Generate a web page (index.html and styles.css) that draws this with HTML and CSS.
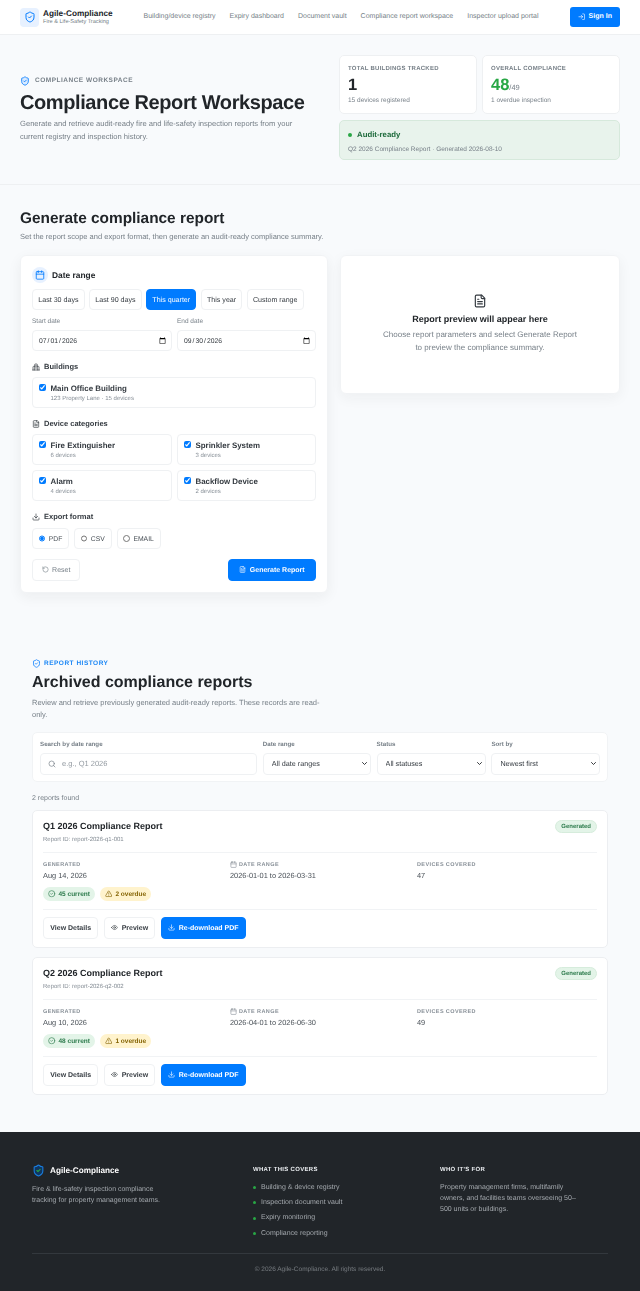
FILE: index.html
```html
<!DOCTYPE html>
<html lang="en">
<head>
    <meta charset="UTF-8">
    <meta name="viewport" content="width=device-width, initial-scale=1.0">
    <title>Compliance Report Workspace - Agile-Compliance</title>
    <link rel="stylesheet" href="styles.css">
</head>
<body>
    <svg class="sprite" aria-hidden="true">
        <symbol id="i-shield" viewBox="0 0 24 24"><path d="M20 13c0 5-3.5 7.5-7.66 8.95a1 1 0 0 1-.67-.01C7.5 20.5 4 18 4 13V6a1 1 0 0 1 1-1c2 0 4.5-1.2 6.24-2.72a1.17 1.17 0 0 1 1.52 0C14.51 3.81 17 5 19 5a1 1 0 0 1 1 1z"/><path d="m9 12 2 2 4-4"/></symbol>
        <symbol id="i-login" viewBox="0 0 24 24"><path d="M15 3h4a2 2 0 0 1 2 2v14a2 2 0 0 1-2 2h-4"/><path d="m10 17 5-5-5-5"/><path d="M15 12H3"/></symbol>
        <symbol id="i-calendar" viewBox="0 0 24 24"><rect x="3" y="4" width="18" height="18" rx="2"/><path d="M16 2v4M8 2v4M3 10h18"/></symbol>
        <symbol id="i-building" viewBox="0 0 24 24"><path d="M8 21V5a2 2 0 0 1 2-2h4a2 2 0 0 1 2 2v16"/><path d="M8 10H5a2 2 0 0 0-2 2v9M16 10h3a2 2 0 0 1 2 2v9M2 21h20"/><path d="M11 7h2M11 11h2M11 15h2"/></symbol>
        <symbol id="i-file" viewBox="0 0 24 24"><path d="M15 2H6a2 2 0 0 0-2 2v16a2 2 0 0 0 2 2h12a2 2 0 0 0 2-2V7Z"/><path d="M14 2v4a2 2 0 0 0 2 2h4"/><path d="M10 9H8M16 13H8M16 17H8"/></symbol>
        <symbol id="i-download" viewBox="0 0 24 24"><path d="M21 15v4a2 2 0 0 1-2 2H5a2 2 0 0 1-2-2v-4"/><path d="m7 10 5 5 5-5"/><path d="M12 15V3"/></symbol>
        <symbol id="i-reset" viewBox="0 0 24 24"><path d="M3 12a9 9 0 1 0 9-9 9.75 9.75 0 0 0-6.74 2.74L3 8"/><path d="M3 3v5h5"/></symbol>
        <symbol id="i-search" viewBox="0 0 24 24"><circle cx="11" cy="11" r="8"/><path d="m21 21-4.3-4.3"/></symbol>
        <symbol id="i-eye" viewBox="0 0 24 24"><path d="M2 12s3.5-7 10-7 10 7 10 7-3.5 7-10 7-10-7-10-7Z"/><circle cx="12" cy="12" r="3"/></symbol>
        <symbol id="i-check" viewBox="0 0 24 24"><circle cx="12" cy="12" r="10"/><path d="m9 12 2 2 4-4"/></symbol>
        <symbol id="i-alert" viewBox="0 0 24 24"><path d="m21.73 18-8-14a2 2 0 0 0-3.48 0l-8 14A2 2 0 0 0 4 21h16a2 2 0 0 0 1.73-3"/><path d="M12 9v4M12 17h.01"/></symbol>
    </svg>

    <header class="topbar">
        <div class="brand">
            <span class="brand-mark"><svg class="icon"><use href="#i-shield"/></svg></span>
            <div class="brand-text">
                <div class="brand-name">Agile-Compliance</div>
                <div class="brand-tag">Fire &amp; Life-Safety Tracking</div>
            </div>
        </div>
        <nav class="nav">
            <a href="#">Building/device registry</a>
            <a href="#">Expiry dashboard</a>
            <a href="#">Document vault</a>
            <a href="#">Compliance report workspace</a>
            <a href="#">Inspector upload portal</a>
        </nav>
        <a class="signin" href="#"><svg class="icon"><use href="#i-login"/></svg>Sign In</a>
    </header>

    <section class="hero">
        <div class="hero-text">
            <div class="eyebrow"><svg class="icon"><use href="#i-shield"/></svg>COMPLIANCE WORKSPACE</div>
            <h1>Compliance Report Workspace</h1>
            <p>Generate and retrieve audit-ready fire and life-safety inspection reports from your current registry and inspection history.</p>
        </div>
        <div class="hero-side">
            <div class="stat">
                <div class="stat-label">TOTAL BUILDINGS TRACKED</div>
                <div class="stat-value">1</div>
                <div class="stat-note">15 devices registered</div>
            </div>
            <div class="stat">
                <div class="stat-label">OVERALL COMPLIANCE</div>
                <div class="stat-value green">48<small>/49</small></div>
                <div class="stat-note">1 overdue inspection</div>
            </div>
            <div class="audit">
                <div class="audit-title"><span class="dot"></span>Audit-ready</div>
                <div class="audit-note">Q2 2026 Compliance Report · Generated 2026-08-10</div>
            </div>
        </div>
    </section>

    <section class="generate">
        <h2>Generate compliance report</h2>
        <p class="lead">Set the report scope and export format, then generate an audit-ready compliance summary.</p>
        <div class="generate-grid">
            <form class="panel form-panel">
                <div class="panel-head">
                    <span class="head-icon"><svg class="icon"><use href="#i-calendar"/></svg></span>
                    <span>Date range</span>
                </div>
                <div class="pills">
                    <button type="button" class="pill">Last 30 days</button>
                    <button type="button" class="pill">Last 90 days</button>
                    <button type="button" class="pill active">This quarter</button>
                    <button type="button" class="pill">This year</button>
                    <button type="button" class="pill">Custom range</button>
                </div>
                <div class="two-col dates">
                    <label class="field"><span>Start date</span><input type="date" value="2026-07-01"></label>
                    <label class="field"><span>End date</span><input type="date" value="2026-09-30"></label>
                </div>

                <div class="group-title"><svg class="icon"><use href="#i-building"/></svg>Buildings</div>
                <label class="option">
                    <input type="checkbox" checked>
                    <span><strong>Main Office Building</strong><small>123 Property Lane · 15 devices</small></span>
                </label>

                <div class="group-title"><svg class="icon"><use href="#i-file"/></svg>Device categories</div>
                <div class="two-col options">
                    <label class="option"><input type="checkbox" checked><span><strong>Fire Extinguisher</strong><small>6 devices</small></span></label>
                    <label class="option"><input type="checkbox" checked><span><strong>Sprinkler System</strong><small>3 devices</small></span></label>
                    <label class="option"><input type="checkbox" checked><span><strong>Alarm</strong><small>4 devices</small></span></label>
                    <label class="option"><input type="checkbox" checked><span><strong>Backflow Device</strong><small>2 devices</small></span></label>
                </div>

                <div class="group-title export"><svg class="icon"><use href="#i-download"/></svg>Export format</div>
                <div class="radios">
                    <label class="radio"><input type="radio" name="format" checked>PDF</label>
                    <label class="radio"><input type="radio" name="format">CSV</label>
                    <label class="radio"><input type="radio" name="format">EMAIL</label>
                </div>

                <div class="form-actions">
                    <button type="reset" class="btn reset"><svg class="icon"><use href="#i-reset"/></svg>Reset</button>
                    <button type="button" class="btn primary big"><svg class="icon"><use href="#i-file"/></svg>Generate Report</button>
                </div>
            </form>

            <div class="panel preview">
                <svg class="icon"><use href="#i-file"/></svg>
                <h3>Report preview will appear here</h3>
                <p>Choose report parameters and select Generate Report to preview the compliance summary.</p>
            </div>
        </div>
    </section>

    <section class="archive">
        <div class="eyebrow blue"><svg class="icon"><use href="#i-shield"/></svg>REPORT HISTORY</div>
        <h2>Archived compliance reports</h2>
        <p class="lead">Review and retrieve previously generated audit-ready reports. These records are read-only.</p>

        <div class="filters">
            <label class="filter search-filter">
                <span>Search by date range</span>
                <span class="search-box"><svg class="icon"><use href="#i-search"/></svg><input type="text" placeholder="e.g., Q1 2026"></span>
            </label>
            <label class="filter"><span>Date range</span><select><option>All date ranges</option></select></label>
            <label class="filter"><span>Status</span><select><option>All statuses</option></select></label>
            <label class="filter"><span>Sort by</span><select><option>Newest first</option></select></label>
        </div>

        <div class="found">2 reports found</div>

        <article class="report">
            <div class="report-head">
                <div>
                    <h3>Q1 2026 Compliance Report</h3>
                    <div class="report-id">Report ID: report-2026-q1-001</div>
                </div>
                <span class="generated">Generated</span>
            </div>
            <div class="report-meta">
                <div><div class="meta-label">GENERATED</div><div class="meta-value">Aug 14, 2026</div></div>
                <div><div class="meta-label"><svg class="icon"><use href="#i-calendar"/></svg>DATE RANGE</div><div class="meta-value">2026-01-01 to 2026-03-31</div></div>
                <div><div class="meta-label">DEVICES COVERED</div><div class="meta-value">47</div></div>
            </div>
            <div class="chips">
                <span class="chip ok"><svg class="icon"><use href="#i-check"/></svg>45 current</span>
                <span class="chip warn"><svg class="icon"><use href="#i-alert"/></svg>2 overdue</span>
            </div>
            <div class="report-actions">
                <a class="btn" href="#">View Details</a>
                <a class="btn" href="#"><svg class="icon"><use href="#i-eye"/></svg>Preview</a>
                <a class="btn primary" href="#"><svg class="icon"><use href="#i-download"/></svg>Re-download PDF</a>
            </div>
        </article>

        <article class="report">
            <div class="report-head">
                <div>
                    <h3>Q2 2026 Compliance Report</h3>
                    <div class="report-id">Report ID: report-2026-q2-002</div>
                </div>
                <span class="generated">Generated</span>
            </div>
            <div class="report-meta">
                <div><div class="meta-label">GENERATED</div><div class="meta-value">Aug 10, 2026</div></div>
                <div><div class="meta-label"><svg class="icon"><use href="#i-calendar"/></svg>DATE RANGE</div><div class="meta-value">2026-04-01 to 2026-06-30</div></div>
                <div><div class="meta-label">DEVICES COVERED</div><div class="meta-value">49</div></div>
            </div>
            <div class="chips">
                <span class="chip ok"><svg class="icon"><use href="#i-check"/></svg>48 current</span>
                <span class="chip warn"><svg class="icon"><use href="#i-alert"/></svg>1 overdue</span>
            </div>
            <div class="report-actions">
                <a class="btn" href="#">View Details</a>
                <a class="btn" href="#"><svg class="icon"><use href="#i-eye"/></svg>Preview</a>
                <a class="btn primary" href="#"><svg class="icon"><use href="#i-download"/></svg>Re-download PDF</a>
            </div>
        </article>
    </section>

    <footer class="footer">
        <div class="footer-grid">
            <div>
                <div class="footer-brand">
                    <svg class="footer-shield" viewBox="0 0 24 24"><path d="M20 13c0 5-3.5 7.5-7.66 8.95a1 1 0 0 1-.67-.01C7.5 20.5 4 18 4 13V6a1 1 0 0 1 1-1c2 0 4.5-1.2 6.24-2.72a1.17 1.17 0 0 1 1.52 0C14.51 3.81 17 5 19 5a1 1 0 0 1 1 1z"/><path class="tick" d="m9 12 2 2 4-4"/></svg>
                    Agile-Compliance
                </div>
                <p>Fire &amp; life-safety inspection compliance tracking for property management teams.</p>
            </div>
            <div>
                <h4>WHAT THIS COVERS</h4>
                <ul>
                    <li>Building &amp; device registry</li>
                    <li>Inspection document vault</li>
                    <li>Expiry monitoring</li>
                    <li>Compliance reporting</li>
                </ul>
            </div>
            <div>
                <h4>WHO IT'S FOR</h4>
                <p class="who">Property management firms, multifamily owners, and facilities teams overseeing 50–500 units or buildings.</p>
            </div>
        </div>
        <div class="copyright">© 2026 Agile-Compliance. All rights reserved.</div>
    </footer>
</body>
</html>
```

FILE: styles.css
```css
* { box-sizing: border-box; }
body {
    margin: 0;
    background: #f8fafc;
    color: #212529;
    font-family: "Liberation Sans", Arial, sans-serif;
    font-size: 8px;
    line-height: 1.5;
    text-rendering: geometricPrecision;
    will-change: opacity;
}
input, select, button { text-rendering: geometricPrecision; }
.sprite { display: none; }
.icon {
    width: 1em;
    height: 1em;
    fill: none;
    stroke: currentColor;
    stroke-width: 2;
    stroke-linecap: round;
    stroke-linejoin: round;
    flex: none;
}
a { text-decoration: none; color: inherit; white-space: nowrap; }
p, h1, h2, h3, h4 { margin: 0; }

/* top bar */
.topbar {
    height: 35px;
    display: flex;
    align-items: center;
    padding: 0 20px;
    background: #fff;
    border-bottom: 1px solid #eef0f2;
}
.brand { display: flex; align-items: center; gap: 4px; width: 123.5px; flex: none; }
.brand-mark {
    width: 19px;
    height: 19px;
    border-radius: 4px;
    background: #e7f1ff;
    color: #007bff;
    display: flex;
    align-items: center;
    justify-content: center;
    font-size: 12px;
}
.brand-text { padding-top: 1px; }
.brand-name { font-size: 8.25px; font-weight: bold; line-height: 10px; color: #212529; }
.brand-tag { font-size: 5.6px; line-height: 7px; color: #767f87; }
.nav { flex: 1; display: flex; gap: 14px; padding-top: 1px; font-size: 7px; color: #767f87; }
.signin {
    display: flex;
    align-items: center;
    justify-content: center;
    gap: 3px;
    width: 50px;
    height: 20px;
    padding-top: 1px;
    border-radius: 3px;
    background: #007bff;
    color: #fff;
    font-size: 7px;
    font-weight: bold;
}
.signin .icon { font-size: 7.5px; margin-top: -1px; }

/* hero */
.hero {
    display: flex;
    justify-content: space-between;
    align-items: center;
    padding: 20px 20px 24px;
    border-bottom: 1px solid #eef0f2;
    background: #f8fafc;
}
.hero-text { width: 290px; padding-top: 4px; }
.eyebrow {
    display: flex;
    align-items: center;
    gap: 5px;
    font-size: 6.5px;
    font-weight: bold;
    letter-spacing: 0.5px;
    color: #767f87;
}
.eyebrow .icon { font-size: 10px; color: #007bff; fill: #d9eaff; }
.hero h1 {
    font-size: 20px;
    line-height: 26px;
    margin-top: 4px;
    letter-spacing: -0.4px;
    white-space: nowrap;
}
.hero p { margin-top: 2.5px; font-size: 7.6px; line-height: 12.5px; color: #767f87; }
.hero-side {
    width: 281px;
    display: grid;
    grid-template-columns: 1fr 1fr;
    gap: 6px 5px;
}
.stat {
    height: 59px;
    padding: 8.5px 8px;
    background: #fff;
    border: 1px solid #eef0f2;
    border-radius: 5px;
}
.stat-label { font-size: 6px; line-height: 9px; font-weight: bold; letter-spacing: 0.25px; color: #767f87; }
.stat-value { height: 20px; font-size: 16.5px; line-height: 20px; margin-top: 1px; font-weight: bold; color: #212529; }
.stat-value.green { color: #28a745; }
.stat-value small { font-size: 7.5px; line-height: 1; font-weight: normal; color: #767f87; }
.stat-note { font-size: 6.5px; line-height: 10px; margin-top: 1.5px; color: #767f87; }
.audit {
    grid-column: 1 / 3;
    height: 40px;
    padding: 8px;
    background: #e8f3ec;
    border: 1px solid #d6e9dc;
    border-radius: 5px;
}
.audit-title { display: flex; align-items: center; gap: 5px; font-size: 7.8px; line-height: 11px; font-weight: bold; color: #1e6b3c; }
.dot { width: 4px; height: 4px; border-radius: 50%; background: #28a745; }
.audit-note { margin-top: 5px; font-size: 6.5px; line-height: 9px; color: #767f87; }

/* generate */
.generate { padding: 23px 20px 0; }
.generate h2 { font-size: 15.4px; line-height: 21px; }
.lead { font-size: 7.5px; color: #767f87; }
.generate .lead { margin-top: 1px; line-height: 13px; }
.generate-grid {
    display: grid;
    grid-template-columns: 308px 280px;
    gap: 12px;
    align-items: start;
    margin-top: 12px;
}
.panel {
    background: #fff;
    border: 1px solid #f1f3f5;
    border-radius: 6px;
    box-shadow: 0 4px 14px rgba(33, 37, 41, 0.06);
}
.form-panel { padding: 11px; height: 338px; }
.panel-head { display: flex; align-items: center; gap: 4px; font-size: 8.4px; font-weight: bold; }
.head-icon {
    width: 16px;
    height: 16px;
    border-radius: 50%;
    background: #e7f1ff;
    color: #007bff;
    display: flex;
    align-items: center;
    justify-content: center;
    font-size: 10px;
}
.pills { display: flex; gap: 4.2px; margin-top: 6px; }
.pill {
    height: 21px;
    padding: 0 5.3px;
    background: #fff;
    border: 1px solid #eff1f3;
    border-radius: 4px;
    font: 7.1px "Liberation Sans", Arial, sans-serif;
    color: #343a40;
    white-space: nowrap;
}
.pill.active { background: #007bff; border-color: #007bff; color: #fff; }
.two-col { display: grid; grid-template-columns: 140px 139px; gap: 5px; }
.dates { margin-top: 6px; }
.field span { display: block; padding-top: 1px; font-size: 6.5px; line-height: 9px; margin-bottom: 4px; color: #767f87; }
.field input {
    width: 100%;
    height: 21px;
    padding: 1px 5px 0;
    border: 1px solid #eff1f3;
    border-radius: 4px;
    font: 6.8px "Liberation Sans", Arial, sans-serif;
    color: #343a40;
    background: #fff;
}
.field input::-webkit-calendar-picker-indicator { width: 7.5px; height: 7.5px; padding: 0; margin: 0; }
.group-title {
    display: flex;
    align-items: center;
    gap: 4px;
    margin-top: 10.5px;
    margin-bottom: 5.5px;
    font-size: 7.5px;
    line-height: 10px;
    font-weight: bold;
    color: #343a40;
}
.group-title.export { margin-top: 11px; margin-bottom: 6px; }
.group-title .icon { font-size: 8px; }
.option {
    display: flex;
    gap: 5px;
    height: 31px;
    padding: 6px;
    border: 1px solid #eff1f3;
    border-radius: 4px;
}
.option input { width: 6.5px; height: 6.5px; margin: 0; accent-color: #007bff; flex: none; }
.option strong { display: block; font-size: 7.9px; line-height: 10px; color: #343a40; }
.option small { display: block; font-size: 6px; line-height: 9.5px; padding-top: 0.5px; color: #868e96; }
.options { row-gap: 5px; }
.radios { display: flex; gap: 5.2px; margin-top: 6px; }
.radio {
    display: flex;
    align-items: center;
    gap: 3.5px;
    height: 21px;
    padding: 1px 5.7px 0;
    border: 1px solid #eff1f3;
    border-radius: 4px;
    font-size: 6.8px;
    line-height: 19px;
    color: #495057;
}
.radio input { width: 6.5px; height: 6.5px; margin: -1px 0 0; accent-color: #007bff; }
.form-actions { display: flex; justify-content: space-between; margin-top: 10px; }

/* buttons */
.btn {
    display: inline-flex;
    align-items: center;
    justify-content: center;
    gap: 3.5px;
    height: 22px;
    padding: 1px 6.3px 0;
    background: #fff;
    border: 1px solid #eff1f3;
    border-radius: 4px;
    font: bold 7px "Liberation Sans", Arial, sans-serif;
    color: #343a40;
    white-space: nowrap;
}
.btn .icon { font-size: 7px; margin-top: -1.5px; }
.btn.primary { background: #007bff; border-color: #007bff; color: #fff; }
.btn.reset { width: 48px; font-weight: normal; color: #767f87; }
.btn.big { width: 88px; }

/* preview */
.preview {
    height: 139px;
    padding: 0 40px 1px;
    display: flex;
    flex-direction: column;
    align-items: center;
    justify-content: center;
    text-align: center;
    box-shadow: 0 4px 14px rgba(33, 37, 41, 0.05);
}
.preview .icon { font-size: 14px; color: #343a40; }
.preview h3 { margin-top: 3px; font-size: 9px; line-height: 16px; }
.preview p { margin-top: 2px; font-size: 8px; line-height: 12.5px; color: #767f87; }

/* archive */
.archive { padding: 65px 32px 37px; }
.eyebrow.blue { color: #1a86f5; gap: 3px; line-height: 10px; padding-top: 1px; }
.eyebrow.blue .icon { font-size: 9px; fill: none; margin-top: -1px; }
.archive h2 { margin-top: 3.5px; line-height: 20px; font-size: 16px; }
.archive .lead { width: 292px; margin-top: 4px; line-height: 12px; }
.filters {
    display: grid;
    grid-template-columns: 217px 108px 109px 108.6px;
    gap: 5.8px;
    height: 50px;
    margin-top: 11.5px;
    padding: 6.5px 7px;
    background: #fff;
    border: 1px solid #f1f3f5;
    border-radius: 5px;
}
.filter > span:first-child { display: block; font-size: 6.2px; line-height: 9px; font-weight: bold; margin-bottom: 4px; color: #767f87; }
.search-box {
    display: flex;
    align-items: center;
    gap: 6px;
    height: 22.5px;
    padding: 0 7px;
    border: 1px solid #eff1f3;
    border-radius: 4px;
}
.search-box .icon { font-size: 8px; color: #767f87; }
.search-box input { flex: 1; min-width: 0; border: 0; outline: 0; padding: 0; font: 7.5px "Liberation Sans", Arial, sans-serif; }
.search-box input::placeholder { color: #939aa1; }
.filter select {
    width: 100%;
    height: 22.5px;
    padding: 0 8px;
    border: 1px solid #eff1f3;
    border-radius: 4px;
    appearance: none;
    background: #fff url("data:image/svg+xml,%3Csvg xmlns='http://www.w3.org/2000/svg' viewBox='0 0 10 6'%3E%3Cpath d='M1 1l4 4 4-4' fill='none' stroke='%23212529' stroke-width='1.8' stroke-linecap='round' stroke-linejoin='round'/%3E%3C/svg%3E") no-repeat right 2.5px center / 5px 3px;
    font: 7.2px "Liberation Sans", Arial, sans-serif;
    color: #343a40;
}
.found { margin-top: 10.5px; margin-bottom: 6.5px; font-size: 7px; line-height: 11px; color: #767f87; }
.report {
    height: 138px;
    margin-bottom: 9px;
    padding: 10px;
    background: #fff;
    border: 1px solid #eceef1;
    border-radius: 5px;
}
.report:last-child { margin-bottom: 0; }
.report-head {
    display: flex;
    justify-content: space-between;
    align-items: flex-start;
    height: 32px;
    border-bottom: 1px solid #f1f3f5;
}
.report-head h3 { font-size: 9px; line-height: 10px; }
.report-id { margin-top: 4.5px; font-size: 6px; line-height: 9px; color: #868e96; }
.generated {
    height: 12.5px;
    padding: 0 5px;
    margin-top: -1px;
    border: 0.5px solid #d6ecdc;
    border-radius: 7px;
    background: #e3f4e8;
    color: #2b7a4b;
    font-size: 6px;
    line-height: 12.5px;
    font-weight: bold;
}
.report-meta {
    display: grid;
    grid-template-columns: repeat(3, 187px);
    margin-top: 7.5px;
}
.meta-label {
    display: flex;
    align-items: center;
    gap: 2px;
    height: 8px;
    font-size: 5.5px;
    line-height: 8px;
    font-weight: bold;
    letter-spacing: 0.4px;
    color: #868e96;
}
.meta-label .icon { font-size: 7px; }
.meta-value { margin-top: 1.5px; font-size: 7.4px; line-height: 11px; color: #495057; }
.chips { display: flex; gap: 5px; margin-top: 6px; }
.chip {
    display: inline-flex;
    align-items: center;
    gap: 3px;
    height: 14px;
    padding: 1px 5px 0;
    border-radius: 7px;
    font-size: 6.5px;
    font-weight: bold;
}
.chip .icon { font-size: 7.5px; margin-top: -1px; }
.chip.ok { background: #e3f4e8; color: #2b7a4b; }
.chip.warn { background: #fff3cd; color: #856404; }
.report-actions { display: flex; gap: 5.5px; margin-top: 8px; padding-top: 7px; border-top: 1px solid #f1f3f5; }

/* footer */
.footer { background: #212529; height: 159px; padding: 32px 32px 0; color: #a3a8ad; }
.footer-grid { display: grid; grid-template-columns: 221px 187px 1fr; height: 89px; }
.footer-brand { display: flex; align-items: center; gap: 5px; font-size: 8.2px; font-weight: bold; color: #fff; line-height: 13px; }
.footer-shield { width: 13px; height: 13px; fill: #10365f; stroke: #1a7ee0; stroke-width: 2; stroke-linejoin: round; }
.footer-shield .tick { fill: none; stroke: #28a745; stroke-linecap: round; }
.footer p { font-size: 7px; line-height: 11.5px; margin-top: 6.5px; width: 135px; }
.footer h4 { padding-top: 1.5px; font-size: 6px; line-height: 9px; letter-spacing: 0.3px; color: #e9ecef; }
.footer ul { list-style: none; margin: 5px 0 0; padding: 0; }
.footer li { display: flex; align-items: center; gap: 5px; font-size: 7px; line-height: 15.4px; }
.footer li::before { content: ""; width: 3px; height: 3px; border-radius: 50%; background: #28a745; }
.footer p.who { margin-top: 7px; width: 145px; line-height: 11px; }
.copyright {
    padding-top: 11px;
    border-top: 1px solid #33383d;
    text-align: center;
    font-size: 6.5px;
    color: #777c80;
}
```
